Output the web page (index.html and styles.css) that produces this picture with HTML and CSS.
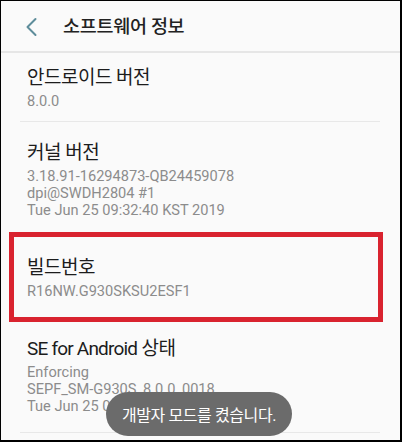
FILE: index.html
```html
<!DOCTYPE html>
<html lang="ko">
<head>
<meta charset="utf-8">
<link rel="stylesheet" href="styles.css">
</head>
<body>
<div class="frame">
  <header class="appbar">
    <svg class="back" width="14" height="20" viewBox="0 0 14 20">
      <path d="M10.5 2 L2.5 10 L10.5 18" fill="none" stroke="#5e8d9b" stroke-width="2" stroke-linecap="round" stroke-linejoin="round"/>
    </svg>
    <h1 class="appbar-title">소프트웨어 정보</h1>
  </header>
  <main class="list">
    <section class="row row-first">
      <div class="row-title">안드로이드 버전</div>
      <div class="row-sub">8.0.0</div>
    </section>
    <section class="row">
      <div class="row-title">커널 버전</div>
      <div class="row-sub">3.18.91-16294873-QB24459078<br>dpi@SWDH2804 #1<br>Tue Jun 25 09:32:40 KST 2019</div>
    </section>
    <section class="row">
      <div class="row-title">빌드번호</div>
      <div class="row-sub">R16NW.G930SKSU2ESF1</div>
    </section>
    <section class="row">
      <div class="row-title"><span class="latin">SE for Android</span> 상태</div>
      <div class="row-sub">Enforcing<br>SEPF_SM-G930S_8.0.0_0018<br>Tue Jun 25 09:42:16 2019</div>
    </section>
  </main>
  <div class="highlight"></div>
  <div class="toast">개발자 모드를 켰습니다.</div>
</div>
</body>
</html>
```
FILE: styles.css
```css
html, body {
  margin: 0;
  padding: 0;
  background: #000;
}
.frame {
  position: relative;
  box-sizing: border-box;
  width: 402px;
  height: 442px;
  overflow: hidden;
  background: #fafafa;
  border: 1px solid #000;
  border-right-width: 2px;
  border-bottom-width: 2px;
  font-family: Roboto, "Noto Sans CJK KR", sans-serif;
}
.appbar {
  display: flex;
  align-items: center;
  height: 50px;
  border-bottom: 2px solid #e6e6e6;
  box-sizing: content-box;
}
.back {
  margin-left: 24px;
  margin-top: 2px;
  flex: none;
}
.appbar-title {
  margin: 0 0 0 24px;
  font-size: 18.5px;
  font-weight: 500;
  letter-spacing: -0.3px;
  color: #222;
  line-height: 24px;
  margin-top: 2px;
}
.list {
  display: flex;
  flex-direction: column;
}
.row {
  padding: 19px 0 17px 7px;
  margin: 0 20px 0 19px;
  border-bottom: 1px solid #e8e8e8;
}
.row-first {
  padding-top: 13px;
  padding-bottom: 11px;
}
.row-title {
  font-size: 19px;
  line-height: 24px;
  color: #1c1c1c;
  letter-spacing: -0.5px;
}
.latin {
  letter-spacing: -0.8px;
}
.row-sub {
  margin-top: 3px;
  font-size: 14.6px;
  line-height: 17px;
  color: #8c8c8c;
}
.highlight {
  position: absolute;
  left: 8px;
  top: 231px;
  width: 374px;
  height: 90px;
  box-sizing: border-box;
  border: 5px solid #d9232f;
}
.toast {
  position: absolute;
  left: 105px;
  top: 391px;
  width: 186px;
  height: 44px;
  border-radius: 22px;
  background: #6b6b6b;
  color: #fff;
  font-size: 16px;
  letter-spacing: -0.4px;
  display: flex;
  align-items: center;
  justify-content: center;
}
```
